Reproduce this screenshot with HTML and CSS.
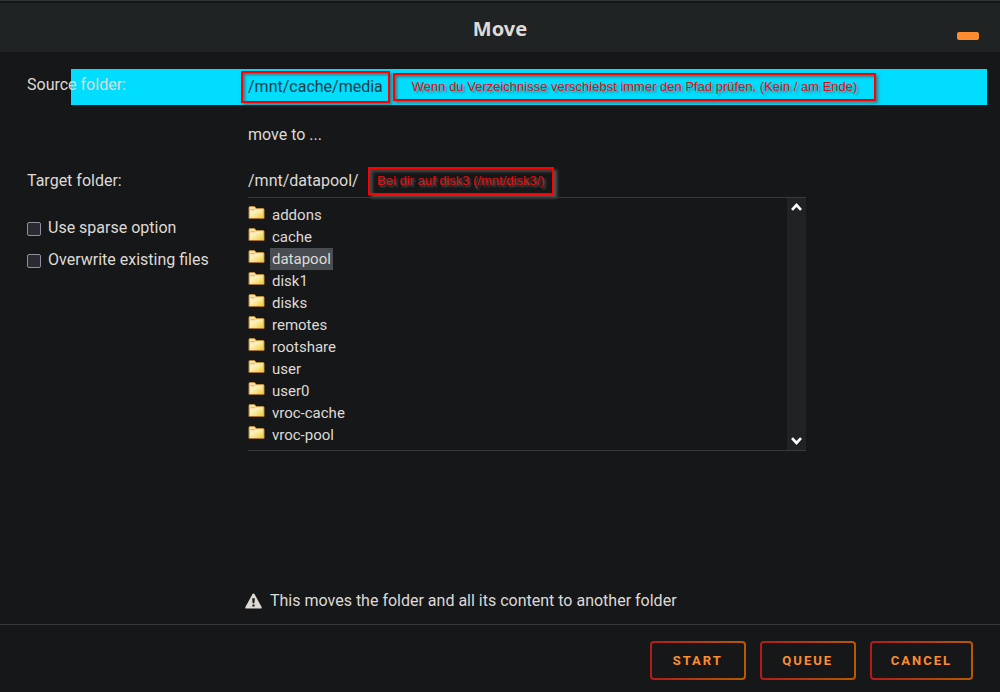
FILE: index.html
```html
<!DOCTYPE html>
<html lang="en">
<head>
    <meta charset="UTF-8">
    <meta name="viewport" content="width=device-width, initial-scale=1.0">
    <title>Move</title>
    <link rel="stylesheet" href="styles.css">
</head>
<body>
    <svg class="sprite" aria-hidden="true">
        <defs>
            <linearGradient id="folder-fill" x1="0" y1="0" x2="1" y2="1">
                <stop offset="0" stop-color="#fffbe6"/>
                <stop offset="0.5" stop-color="#fae89a"/>
                <stop offset="1" stop-color="#eecb35"/>
            </linearGradient>
            <symbol id="folder" viewBox="0 0 16 14">
                <path d="M0.5 1.5Q0.5 0.5 1.5 0.5H6L7.5 2.5H14.5Q15.5 2.5 15.5 3.5V12.5H0.5Z" fill="#f6e3ac" stroke="#b98a3c"/>
                <path d="M1.5 5.5H6L7.5 4H14.5V12H1.5Z" fill="url(#folder-fill)"/>
                <path d="M2.5 3.5H6" stroke="#e5b85c"/>
                <path d="M0.5 12.5H15.5" stroke="#a5712b"/>
            </symbol>
        </defs>
    </svg>

    <div class="dialog">
        <header class="header">
            <h1>Move</h1>
            <button class="minimize-btn" aria-label="Minimize"></button>
        </header>

        <form class="content">
            <!-- Source -->
            <div class="row source-row">
                <span class="label">Source folder:</span>
                <div class="value">
                    <span class="path">/mnt/cache/media</span>
                    <span class="note">Wenn du Verzeichnisse verschiebst immer den Pfad prüfen. (Kein / am Ende)</span>
                </div>
            </div>

            <div class="row move-row">
                <span></span>
                <span>move to ...</span>
            </div>

            <!-- Target -->
            <div class="row target-row">
                <label class="label" for="target">Target folder:</label>
                <div class="value">
                    <input type="text" class="target-input" id="target" value="/mnt/datapool/">
                    <span class="note note-target">Bei dir auf disk3 (/mnt/disk3/)</span>
                </div>
            </div>

            <div class="row">
                <div class="options">
                    <label class="option"><input type="checkbox"> Use sparse option</label>
                    <label class="option"><input type="checkbox"> Overwrite existing files</label>
                </div>
                <div class="file-tree">
                    <ul class="folders">
                        <li><svg class="folder-icon"><use href="#folder"/></svg><a href="#">addons</a></li>
                        <li><svg class="folder-icon"><use href="#folder"/></svg><a href="#">cache</a></li>
                        <li><svg class="folder-icon"><use href="#folder"/></svg><a href="#" class="selected">datapool</a></li>
                        <li><svg class="folder-icon"><use href="#folder"/></svg><a href="#">disk1</a></li>
                        <li><svg class="folder-icon"><use href="#folder"/></svg><a href="#">disks</a></li>
                        <li><svg class="folder-icon"><use href="#folder"/></svg><a href="#">remotes</a></li>
                        <li><svg class="folder-icon"><use href="#folder"/></svg><a href="#">rootshare</a></li>
                        <li><svg class="folder-icon"><use href="#folder"/></svg><a href="#">user</a></li>
                        <li><svg class="folder-icon"><use href="#folder"/></svg><a href="#">user0</a></li>
                        <li><svg class="folder-icon"><use href="#folder"/></svg><a href="#">vroc-cache</a></li>
                        <li><svg class="folder-icon"><use href="#folder"/></svg><a href="#">vroc-pool</a></li>
                    </ul>
                    <div class="scrollbar">
                        <button type="button" class="scroll-btn" aria-label="Scroll up">
                            <svg width="11" height="8" viewBox="0 0 11 8"><path d="M1 6.8L5.5 2L10 6.8" fill="none" stroke="#fff" stroke-width="2.6"/></svg>
                        </button>
                        <button type="button" class="scroll-btn" aria-label="Scroll down">
                            <svg width="11" height="8" viewBox="0 0 11 8"><path d="M1 1.2L5.5 6L10 1.2" fill="none" stroke="#fff" stroke-width="2.6"/></svg>
                        </button>
                    </div>
                </div>
            </div>

            <div class="row warning-row">
                <span></span>
                <div class="warning">
                    <svg width="17" height="16" viewBox="0 0 17 16">
                        <path d="M8.5 0.5Q9.2 0.5 9.6 1.2L16.6 14Q17 15.5 15.8 15.5H1.2Q0 15.5 0.4 14L7.4 1.2Q7.8 0.5 8.5 0.5Z" fill="#dedad6"/>
                        <path d="M7.2 5.2H9.8L9.4 10.2H7.6ZM7.4 11.4H9.6V13.6H7.4Z" fill="#161718"/>
                    </svg>
                    <span>This moves the folder and all its content to another folder</span>
                </div>
            </div>
        </form>

        <footer class="footer">
            <button class="btn">Start</button>
            <button class="btn">Queue</button>
            <button class="btn">Cancel</button>
        </footer>
    </div>
</body>
</html>
```

FILE: styles.css
```css
:root {
    --background: #161718;
    --header: #1f2324;
    --text: #dedad6;
    --line: #38393b;
    --orange: #ff8c2f;
    --highlight: #00ddff;
}

* {
    box-sizing: border-box;
}

body {
    margin: 0;
    background: var(--background);
    color: var(--text);
    font-family: Roboto, 'Noto Sans', sans-serif;
    font-size: 16px;
    line-height: 22px;
}

.sprite {
    position: absolute;
    width: 0;
    height: 0;
}

.dialog {
    display: flex;
    flex-direction: column;
    min-height: 100vh;
}

.header {
    display: flex;
    align-items: center;
    height: 52px;
    padding: 4px 21px 0 43px;
    border-top: 1px solid #303535;
    background: linear-gradient(var(--background) 2px, var(--header) 2px);
}

.header h1 {
    flex: 1;
    margin: 0;
    text-align: center;
    font-family: 'Noto Sans', sans-serif;
    font-size: 20px;
    font-weight: 700;
}

.minimize-btn {
    width: 22px;
    height: 8px;
    margin-top: 14px;
    padding: 0;
    border: none;
    border-radius: 2px;
    background: var(--orange);
    cursor: pointer;
}

.content {
    display: flex;
    flex: 1;
    flex-direction: column;
    padding: 17px 27px 12px;
}

.row {
    display: grid;
    grid-template-columns: 221px 1fr;
}

.value {
    display: flex;
    align-items: center;
}

/* Source row with highlight bar behind the text */
.source-row {
    position: relative;
    z-index: 0;
    height: 36px;
}

.source-row::before {
    content: "";
    position: absolute;
    z-index: -1;
    top: 0;
    bottom: 0;
    left: 44px;
    right: -14px;
    background: var(--highlight);
}

.source-row .label {
    line-height: 32px;
}

.path {
    margin-left: -7px;
    padding: 3px 5px;
    border: 2px solid #f00;
    box-shadow: 2px 2px 3px rgba(80, 80, 80, 0.7), inset 2px 2px 3px rgba(80, 80, 80, 0.7);
    color: #1f3c44;
}

.note {
    margin-left: 3px;
    padding: 3px 17px;
    border: 2px solid #f00;
    box-shadow: 2px 2px 3px rgba(90, 90, 90, 0.8), inset 2px 2px 3px rgba(90, 90, 90, 0.8);
    color: #e01010;
    font-family: 'Liberation Sans', Arial, sans-serif;
    font-size: 13px;
    line-height: 18px;
    text-shadow: 2px 2px 2px rgba(80, 80, 80, 0.5);
    white-space: nowrap;
}

.note-target {
    padding: 3px 7px;
    box-shadow: 3px 3px 3px #555, inset 3px 3px 3px #444;
    text-shadow: 2px 2px 2px #555;
}

.move-row {
    padding: 19px 0;
}

.target-row {
    align-items: center;
    height: 32px;
}

.target-input {
    width: 117px;
    padding: 0;
    border: none;
    outline: none;
    background: transparent;
    color: inherit;
    font: inherit;
}

.options {
    padding-top: 15px;
}

.option {
    display: flex;
    align-items: center;
    gap: 7px;
    height: 32px;
}

.option input {
    appearance: none;
    width: 14px;
    height: 14px;
    margin: 2px 0 0;
    border: 1px solid #8f8f9d;
    border-radius: 2px;
    background: #2b2a33;
}

.option input:checked {
    background: var(--orange);
}

/* Folder list */
.file-tree {
    display: flex;
    width: 77%;
    border-top: 1px solid var(--line);
    border-bottom: 1px solid var(--line);
}

.folders {
    flex: 1;
    margin: 0;
    padding: 6px 0 4px;
    list-style: none;
    font-size: 15px;
}

.folders li {
    display: flex;
    gap: 5px;
    height: 22px;
}

.folders a {
    padding: 0 2px;
    color: inherit;
    text-decoration: none;
}

.folders a:hover,
.folders .selected {
    background: #474d50;
}

.folder-icon {
    width: 17px;
    height: 14px;
    margin-top: 2px;
}

.scrollbar {
    display: flex;
    flex-direction: column;
    justify-content: space-between;
    width: 19px;
    background: var(--header);
}

.scroll-btn {
    display: flex;
    align-items: center;
    justify-content: center;
    height: 18px;
    padding: 0;
    border: none;
    background: none;
}

.warning-row {
    margin-top: auto;
}

.warning {
    display: flex;
    align-items: center;
    gap: 8px;
    margin-left: -3px;
}

.footer {
    display: flex;
    justify-content: flex-end;
    gap: 14px;
    padding: 16px 27px 12px;
    border-top: 1px solid var(--line);
}

.btn {
    min-width: 96px;
    padding: 10px 19px;
    border: 2px solid transparent;
    border-radius: 4px;
    background: linear-gradient(var(--background), var(--background)) padding-box,
        linear-gradient(90deg, #b51a17, #b85a00) border-box;
    color: var(--orange);
    font-family: Roboto, 'Noto Sans', sans-serif;
    font-size: 13px;
    font-weight: 700;
    line-height: 15px;
    letter-spacing: 2px;
    text-transform: uppercase;
    cursor: pointer;
}
```
